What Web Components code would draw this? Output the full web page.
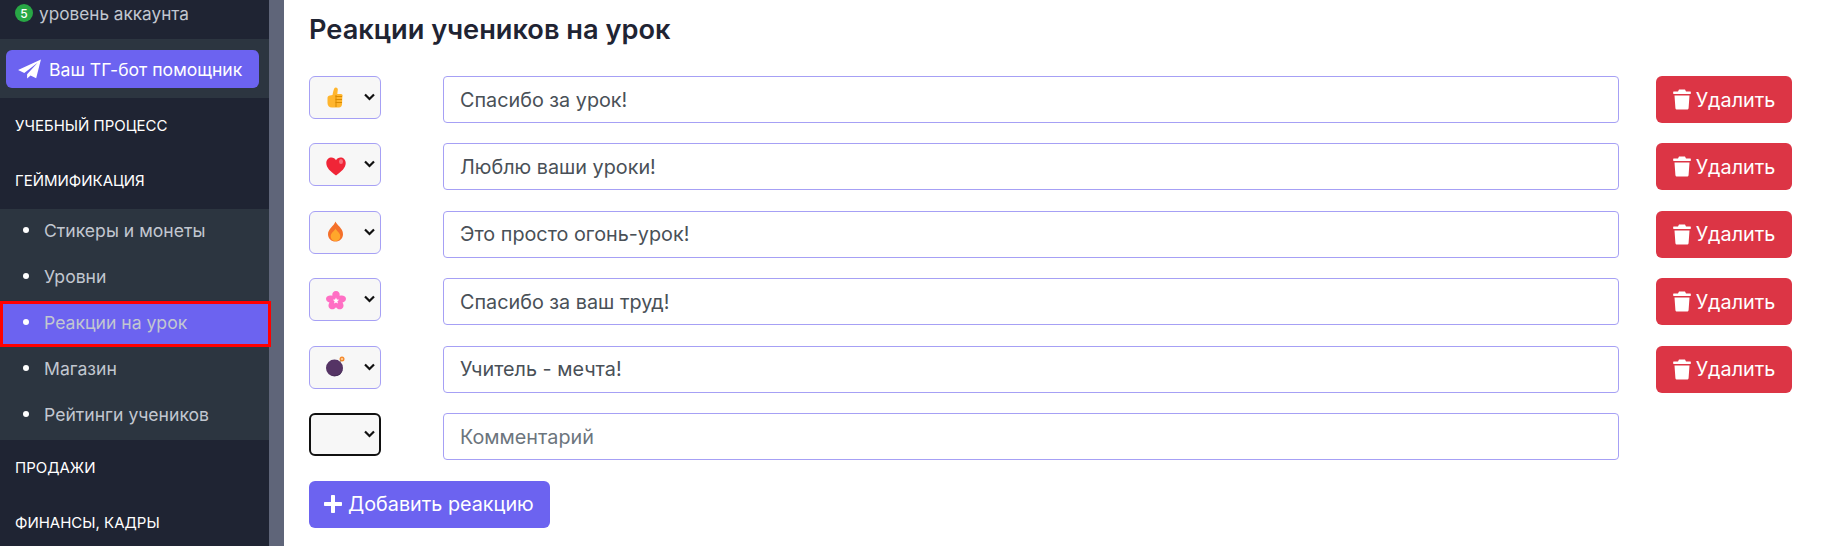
<!DOCTYPE html>
<html lang="ru">
<head>
<meta charset="utf-8">
<title>Реакции учеников на урок</title>
<style>
  html, body { margin: 0; height: 100%; overflow: hidden; background: #fff; }
  body { font-family: Inter, "Noto Sans", sans-serif; }
  #app { display: flex; height: 546px; }
</style>
</head>
<body>
<div id="app">
  <side-bar>
    <level-line slot="top" level="5">уровень аккаунта</level-line>
    <tg-button slot="top">Ваш ТГ-бот помощник</tg-button>
    <nav-head>Учебный процесс</nav-head>
    <nav-head>Геймификация</nav-head>
    <nav-group>
      <nav-item>Стикеры и монеты</nav-item>
      <nav-item>Уровни</nav-item>
      <nav-item active>Реакции на урок</nav-item>
      <nav-item>Магазин</nav-item>
      <nav-item>Рейтинги учеников</nav-item>
    </nav-group>
    <nav-head>Продажи</nav-head>
    <nav-head>Финансы, кадры</nav-head>
  </side-bar>
  <reaction-page heading="Реакции учеников на урок">
    <reaction-row emoji="thumb" value="Спасибо за урок!"></reaction-row>
    <reaction-row emoji="heart" value="Люблю ваши уроки!"></reaction-row>
    <reaction-row emoji="fire" value="Это просто огонь-урок!"></reaction-row>
    <reaction-row emoji="flower" value="Спасибо за ваш труд!"></reaction-row>
    <reaction-row emoji="bomb" value="Учитель - мечта!"></reaction-row>
    <reaction-row placeholder="Комментарий" focused></reaction-row>
    <add-button>Добавить реакцию</add-button>
  </reaction-page>
</div>

<script>
// ---------------------------------------------------------------------------
// Sidebar
// ---------------------------------------------------------------------------

class SideBar extends HTMLElement {
  connectedCallback() {
    if (this.shadowRoot) return;
    this.attachShadow({ mode: "open" }).innerHTML = `
      <style>
        :host { display: flex; flex: none; width: 284px; height: 546px; overflow: hidden; }
        .col { width: 269px; background: #1f2433; display: flex; flex-direction: column; }
        .scroll { width: 15px; background: #5f6579; }
      </style>
      <div class="col">
        <slot name="top"></slot>
        <slot></slot>
      </div>
      <div class="scroll"></div>`;
  }
}

class LevelLine extends HTMLElement {
  connectedCallback() {
    if (this.shadowRoot) return;
    this.attachShadow({ mode: "open" }).innerHTML = `
      <style>
        :host { display: flex; flex: none; align-items: center; gap: 6px; height: 39px; box-sizing: border-box;
                padding: 0 0 13px 15px; color: #c2c7d0; font-size: 17.2px; }
        .badge { width: 18px; height: 18px; border-radius: 50%; background: #28a745; color: #fff;
                 font-size: 12px; font-weight: 500; display: flex; align-items: center; justify-content: center; }
      </style>
      <span class="badge">${this.getAttribute("level")}</span><slot></slot>`;
  }
}

class TgButton extends HTMLElement {
  connectedCallback() {
    if (this.shadowRoot) return;
    this.attachShadow({ mode: "open" }).innerHTML = `
      <style>
        :host { display: block; flex: none; height: 59px; box-sizing: border-box; padding: 11px 10px 10px 6px; background: #2c3540; }
        .btn { height: 38px; border-radius: 6px; background: #6c63f0; color: #fff; font-size: 17.6px;
               display: flex; align-items: center; gap: 7px; padding-left: 11px; }
        svg { width: 25px; height: 20px; fill: #fff; flex: none; }
      </style>
      <div class="btn">
        <svg viewBox="0 0 25 21"><path d="M24.5 0.5 L0.5 11.5 L7 14.6 L21 4 L10 16 L10 20.5 L13.6 17.2 L19.5 20.2 Z"/></svg>
        <slot></slot>
      </div>`;
  }
}

class NavHead extends HTMLElement {
  connectedCallback() {
    if (this.shadowRoot) return;
    this.attachShadow({ mode: "open" }).innerHTML = `
      <style>
        :host { display: flex; flex: none; align-items: center; height: 55px; padding-left: 15px; box-sizing: border-box;
                color: #fff; font-size: 15px; text-transform: uppercase; }
      </style>
      <slot></slot>`;
  }
}

class NavGroup extends HTMLElement {
  connectedCallback() {
    if (this.shadowRoot) return;
    this.attachShadow({ mode: "open" }).innerHTML = `
      <style>
        :host { display: block; flex: none; background: #2c3540; height: 231px; margin-top: 1px; }
      </style>
      <slot></slot>`;
  }
}

class NavItem extends HTMLElement {
  connectedCallback() {
    if (this.shadowRoot) return;
    this.attachShadow({ mode: "open" }).innerHTML = `
      <style>
        :host { display: flex; align-items: center; height: 46px; box-sizing: border-box; padding: 0 0 4px 23px;
                color: #c2c7d0; font-size: 17.6px; position: relative; }
        :host([active]) { background: #6c63f0; }
        :host([active])::after { content: ""; position: absolute; left: 0; top: 0; width: 271px; height: 46px;
                box-sizing: border-box; border: 3px solid #f00; }
        i { width: 6px; height: 6px; border-radius: 50%; background: #fff; margin-right: 15px; }
      </style>
      <i></i><slot></slot>`;
  }
}

// ---------------------------------------------------------------------------
// Main panel
// ---------------------------------------------------------------------------

class ReactionPage extends HTMLElement {
  connectedCallback() {
    if (this.shadowRoot) return;
    this.attachShadow({ mode: "open" }).innerHTML = `
      <style>
        :host { display: block; flex: 1; box-sizing: border-box; padding: 0 29px 0 25px; color: #1f2433; }
        h1 { margin: 0; height: 76px; box-sizing: border-box; padding-top: 13px; font-size: 27.2px; line-height: 34px; font-weight: 600; }
        .rows { display: flex; flex-direction: column; gap: 20.45px; }
      </style>
      <h1>${this.getAttribute("heading")}</h1>
      <div class="rows"><slot></slot></div>`;
  }
}

const EMOJI = {
  thumb: `<path fill="#ffb52d" d="M1.5 11 C1.5 9.5 2.5 8.5 4 8.5 L6.5 8 C7 5.5 7.6 3 8.2 1.6 C9.1 -.2 12 .4 11.8 2.8 L11.3 7 L15 7 C16.6 7 17 9 16.3 10 L16 17.5 C15.8 19.5 14.5 20.5 13 20.5 L6 20.5 C3 20.5 1.5 18.5 1.5 16 Z"/><path stroke="#d98a00" stroke-width="1" fill="none" d="M9.5 9.5 H16 M9.5 12.5 H16 M9.5 15.5 H16 M10 8 V20"/>`,
  heart: `<path fill="#f02537" d="M10 21.5 C4.5 17.5 .3 14 .3 9 C.3 5.5 2.8 3.5 5.5 3.5 C7.4 3.5 9 4.5 10 6.3 C11 4.5 12.6 3.5 14.5 3.5 C17.2 3.5 19.7 5.5 19.7 9 C19.7 14 15.5 17.5 10 21.5 Z"/><ellipse fill="#f8707e" cx="15" cy="7.6" rx="2" ry="2.5"/>`,
  fire: `<path fill="#f4702a" d="M9.5 .5 C10.5 4 17 7 17 13.2 C17 17.6 13.5 20.5 9.5 20.5 C5.5 20.5 2 17.6 2 13.2 C2 8 8 5 9.5 .5 Z"/><path fill="#ffa72b" d="M9.5 7.5 C10.5 10 14.3 12 14.3 15.2 C14.3 18 12 20 9.5 20 C7 20 4.7 18 4.7 15.2 C4.7 12 8.5 10 9.5 7.5 Z"/>`,
  flower: `<path fill="#ff6fc4" d="M10 2 C13 2 14 4.4 13.6 6.8 C16 5.9 19.4 6.3 19.9 9.3 C20.3 11.6 18.5 13 16.5 13.5 C18 15.5 18 18.4 15.5 19.9 C13.5 21 11 19.9 10 18.2 C9 19.9 6.5 21 4.5 19.9 C2 18.4 2 15.5 3.5 13.5 C1.5 13 -.3 11.6 .1 9.3 C.6 6.3 4 5.9 6.4 6.8 C6 4.4 7 2 10 2 Z"/><path fill="#fff" d="M10 8.4 L10.9 10.6 L13.2 10.8 L11.4 12.3 L12 14.6 L10 13.4 L8 14.6 L8.6 12.3 L6.8 10.8 L9.1 10.6 Z"/>`,
  bomb: `<circle cx="8.5" cy="12" r="8.5" fill="#553465"/><path fill="#3f2a52" d="M2.5 18 C5.5 20.5 11.5 21 14.5 18 C16.5 16 17 13 16.6 11 C17 15 14.5 19 8.5 19.6 C6.5 19.8 4.1 19.2 2.5 18 Z"/><circle cx="16" cy="2.9" r="2.5" fill="#f58a2e"/><circle cx="16" cy="2.9" r="1" fill="#ffd8a8"/><path stroke="#a98a6a" stroke-width="1.3" d="M14 5.5 L15 4.5"/>`,
};

class ReactionRow extends HTMLElement {
  connectedCallback() {
    if (this.shadowRoot) return;
    const emoji = this.getAttribute("emoji");
    const value = this.getAttribute("value");
    const placeholder = this.getAttribute("placeholder");
    this.attachShadow({ mode: "open" }).innerHTML = `
      <style>
        :host { display: flex; align-items: flex-start; height: 47px; }
        .pick { flex: none; width: 72px; height: 43px; box-sizing: border-box; border: 1px solid #a6a0f5;
                border-radius: 6px; background: #f7f7f7; display: flex; align-items: center; position: relative; }
        :host([focused]) .pick { border: 2px solid #111; }
        .emoji { width: 22px; height: 22px; margin-left: 16px; }
        .chev { position: absolute; left: 54px; top: 16px; width: 11px; height: 8px; }
        :host([focused]) .chev { left: 53px; top: 15px; }
        .text { flex: none; width: 1176px; height: 47px; margin-left: 62px; box-sizing: border-box;
                border: 1px solid #a6a0f5; border-radius: 4px; padding: 0 16px; display: flex; align-items: center;
                font-size: 19.8px; color: #495057; }
        .text.ph { color: #6c757d; }
        .del { flex: none; width: 136px; height: 47px; margin-left: 37px; box-sizing: border-box; border-radius: 6px;
               background: #dc3545; color: #fff; font-size: 19.8px; display: flex; align-items: center; justify-content: center; gap: 5px; }
        .del svg { width: 18px; height: 21px; fill: #fff; }
      </style>
      <div class="pick">
        ${emoji ? `<svg class="emoji" viewBox="0 0 22 22">${EMOJI[emoji]}</svg>` : ""}
        <svg class="chev" viewBox="0 0 11 8"><path d="M1 1.5 L5.5 6 L10 1.5" fill="none" stroke="#111" stroke-width="2.2"/></svg>
      </div>
      <div class="text ${placeholder ? "ph" : ""}">${value || placeholder}</div>
      ${emoji ? `<div class="del">
        <svg viewBox="0 0 18 21"><path d="M6 0.5 H12 L13 2.5 H17.5 C18 2.5 18 5 17.5 5 H.5 C0 5 0 2.5 .5 2.5 H5 Z M1.5 6.5 H16.5 L15.6 19 C15.5 20 14.8 20.5 14 20.5 H4 C3.2 20.5 2.5 20 2.4 19 Z"/></svg>
        <span>Удалить</span></div>` : ""}`;
  }
}

class AddButton extends HTMLElement {
  connectedCallback() {
    if (this.shadowRoot) return;
    this.attachShadow({ mode: "open" }).innerHTML = `
      <style>
        :host { display: flex; width: 241px; height: 47px; box-sizing: border-box; border-radius: 6px; background: #6c63f0;
                color: #fff; font-size: 19.8px; align-items: center; gap: 6px; padding-left: 15px; }
        svg { width: 18px; height: 18px; fill: #fff; flex: none; }
      </style>
      <svg viewBox="0 0 18 18"><path d="M7 1 C7 .4 7.4 0 8 0 H10 C10.6 0 11 .4 11 1 V7 H17 C17.6 7 18 7.4 18 8 V10 C18 10.6 17.6 11 17 11 H11 V17 C11 17.6 10.6 18 10 18 H8 C7.4 18 7 17.6 7 17 V11 H1 C.4 11 0 10.6 0 10 V8 C0 7.4 .4 7 1 7 H7 Z"/></svg>
      <slot></slot>`;
  }
}

customElements.define("side-bar", SideBar);
customElements.define("level-line", LevelLine);
customElements.define("tg-button", TgButton);
customElements.define("nav-head", NavHead);
customElements.define("nav-group", NavGroup);
customElements.define("nav-item", NavItem);
customElements.define("reaction-page", ReactionPage);
customElements.define("reaction-row", ReactionRow);
customElements.define("add-button", AddButton);
</script>
</body>
</html>
